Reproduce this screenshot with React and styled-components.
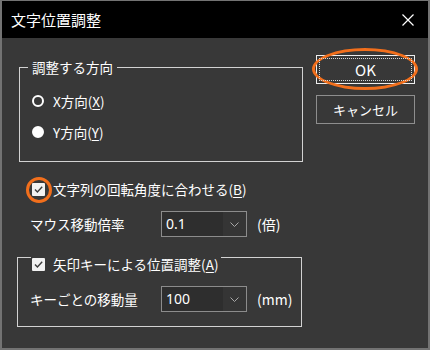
import React from "react";
import styled, { createGlobalStyle } from "styled-components";

const GlobalStyle = createGlobalStyle`
  html, body { margin: 0; padding: 0; background: #383838; }
  body { font-family: "Noto Sans CJK JP", "Noto Sans", sans-serif; color: #fff; }
  * { box-sizing: border-box; }
`;

const ORANGE = "#f26f1c";

const Window = styled.div`
  width: 430px;
  height: 350px;
  border: 2px solid #737373;
  border-top-width: 1px;
  background: #383838;
  display: flex;
  flex-direction: column;
`;

const TitleBar = styled.div`
  height: 37px;
  flex: none;
  background: #000;
  display: flex;
  align-items: center;
  padding: 0 14px 0 9px;
`;

const Title = styled.div`
  flex: 1;
  font-size: 15px;
  line-height: 20px;
  color: #fff;
`;

const CloseButton = styled.div`
  width: 12px;
  height: 12px;
  display: flex;
  margin-top: 1px;
  svg { display: block; }
`;

const Body = styled.div`
  flex: 1;
  display: flex;
  padding-left: 15px;
`;

const LeftColumn = styled.div`
  width: 285px;
  padding-top: 20px;
  display: flex;
  flex-direction: column;
`;

const Group = styled.fieldset`
  margin: ${(p) => (p.$inset ? "0 0 0 2px" : "4px 0 0 0")};
  width: ${(p) => (p.$inset ? "284px" : "285px")};
  border: 1px solid #d2d2d2;
  padding: 0;
  min-inline-size: 0;
`;

const Legend = styled.legend`
  margin-left: ${(p) => (p.$check ? "13px" : "8px")};
  padding: ${(p) => (p.$check ? "14px 3px 0 1px" : "0 4px")};
  font-size: 13.5px;
  line-height: 18px;
  display: ${(p) => (p.$check ? "flex" : "block")};
  align-items: center;
  gap: 8px;
`;

const RadioList = styled.div`
  display: flex;
  flex-direction: column;
  gap: 11px;
  padding: 15px 0 19px 12px;
`;

const ControlRow = styled.div`
  height: 20px;
  display: flex;
  align-items: center;
  font-size: 13.5px;
  gap: ${(p) => p.$gap || 9}px;
`;

const Radio = styled.span`
  width: 12px;
  height: 12px;
  border-radius: 50%;
  border: 2px solid #fff;
  background: ${(p) => (p.$checked ? "#fff" : "transparent")};
  flex: none;
`;

const Under = styled.span`
  text-decoration: underline;
  text-underline-offset: 2px;
`;

const CheckLine = styled(ControlRow)`
  margin-top: 17px;
  padding-left: 15px;
`;

const CheckBoxWrap = styled.span`
  position: relative;
  width: 13px;
  height: 13px;
  flex: none;
  display: flex;
`;

const CheckBox = styled.span`
  width: 13px;
  height: 13px;
  background: #f2f2f2;
  border-radius: 1px;
  display: flex;
  align-items: center;
  justify-content: center;
  svg { display: block; }
`;

const CircleMark = styled.span`
  position: absolute;
  left: -6px;
  top: -6px;
  width: 26px;
  height: 26px;
  border: 3px solid ${ORANGE};
  border-radius: 50%;
  pointer-events: none;
`;

const FieldRow = styled.div`
  height: 26px;
  display: flex;
  align-items: center;
  margin-top: ${(p) => p.$top || 0}px;
  padding-left: ${(p) => p.$indent || 0}px;
`;

const FieldLabel = styled.div`
  width: 131px;
  font-size: 13.5px;
  line-height: 18px;
`;

const Combo = styled.div`
  width: 86px;
  height: 26px;
  border: 1px solid #8c8c8c;
  display: flex;
`;

const ComboValue = styled.div`
  flex: 1;
  background: #2e2e2e;
  padding-left: 4px;
  font-family: "Noto Sans", sans-serif;
  font-size: 14px;
  line-height: 24px;
  color: #fff;
`;

const ComboArrow = styled.div`
  width: 23px;
  background: #353535;
  display: flex;
  align-items: center;
  justify-content: center;
  svg { display: block; }
`;

const Unit = styled.div`
  margin-left: 10px;
  font-size: 14px;
  line-height: 18px;
`;

const GroupBody = styled.div`
  padding: 13px 0 14px 12px;
`;

const ButtonColumn = styled.div`
  margin-left: 14px;
  padding-top: 17px;
  display: flex;
  flex-direction: column;
  gap: 11px;
`;

const DialogButton = styled.div`
  position: relative;
  width: 99px;
  height: 29px;
  border: 1px solid ${(p) => (p.$default ? "#ededed" : "#8e8e8e")};
  display: flex;
  align-items: center;
  justify-content: center;
  font-size: ${(p) => (p.$default ? "15px" : "13px")};
  line-height: 18px;
  color: #fff;
  ${(p) =>
    p.$default &&
    `&::after {
      content: "";
      position: absolute;
      inset: 2px;
      border: 1px dotted #d8d8d8;
    }`}
`;

const EllipseMark = styled.span`
  position: absolute;
  left: -5px;
  right: -4px;
  top: -8px;
  bottom: -7px;
  border: 3px solid ${ORANGE};
  border-radius: 50%;
  pointer-events: none;
`;

const Check = () => (
  <CheckBox>
    <svg width="11" height="11" viewBox="0 0 11 11">
      <path d="M2 5.6 L4.4 8 L9.2 2.8" fill="none" stroke="#3c3c3c" strokeWidth="1.4" />
    </svg>
  </CheckBox>
);

const Chevron = () => (
  <svg width="9" height="5" viewBox="0 0 9 5">
    <path d="M0.5 0.5 L4.5 4.5 L8.5 0.5" fill="none" stroke="#a8a8a8" strokeWidth="1" />
  </svg>
);

const ComboBox = ({ value }) => (
  <Combo>
    <ComboValue>{value}</ComboValue>
    <ComboArrow>
      <Chevron />
    </ComboArrow>
  </Combo>
);

export default function App() {
  return (
    <>
      <GlobalStyle />
      <Window>
        <TitleBar>
          <Title>文字位置調整</Title>
          <CloseButton>
            <svg width="12" height="12" viewBox="0 0 12 12">
              <path d="M0.5 0.5 L11.5 11.5 M11.5 0.5 L0.5 11.5" stroke="#fff" strokeWidth="1.2" />
            </svg>
          </CloseButton>
        </TitleBar>
        <Body>
          <LeftColumn>
            <Group $inset>
              <Legend>調整する方向</Legend>
              <RadioList>
                <ControlRow>
                  <Radio />
                  <span>
                    X方向(<Under>X</Under>)
                  </span>
                </ControlRow>
                <ControlRow>
                  <Radio $checked />
                  <span>
                    Y方向(<Under>Y</Under>)
                  </span>
                </ControlRow>
              </RadioList>
            </Group>

            <CheckLine $gap={8}>
              <CheckBoxWrap>
                <Check />
                <CircleMark />
              </CheckBoxWrap>
              <span>
                文字列の回転角度に合わせる(<Under>B</Under>)
              </span>
            </CheckLine>

            <FieldRow $top={12} $indent={13}>
              <FieldLabel>マウス移動倍率</FieldLabel>
              <ComboBox value="0.1" />
              <Unit>(倍)</Unit>
            </FieldRow>

            <Group>
              <Legend $check>
                <CheckBoxWrap>
                  <Check />
                </CheckBoxWrap>
                <span>
                  矢印キーによる位置調整(<Under>A</Under>)
                </span>
              </Legend>
              <GroupBody>
                <FieldRow>
                  <FieldLabel>キーごとの移動量</FieldLabel>
                  <ComboBox value="100" />
                  <Unit>(mm)</Unit>
                </FieldRow>
              </GroupBody>
            </Group>
          </LeftColumn>

          <ButtonColumn>
            <DialogButton $default>
              OK
              <EllipseMark />
            </DialogButton>
            <DialogButton>キャンセル</DialogButton>
          </ButtonColumn>
        </Body>
      </Window>
    </>
  );
}
